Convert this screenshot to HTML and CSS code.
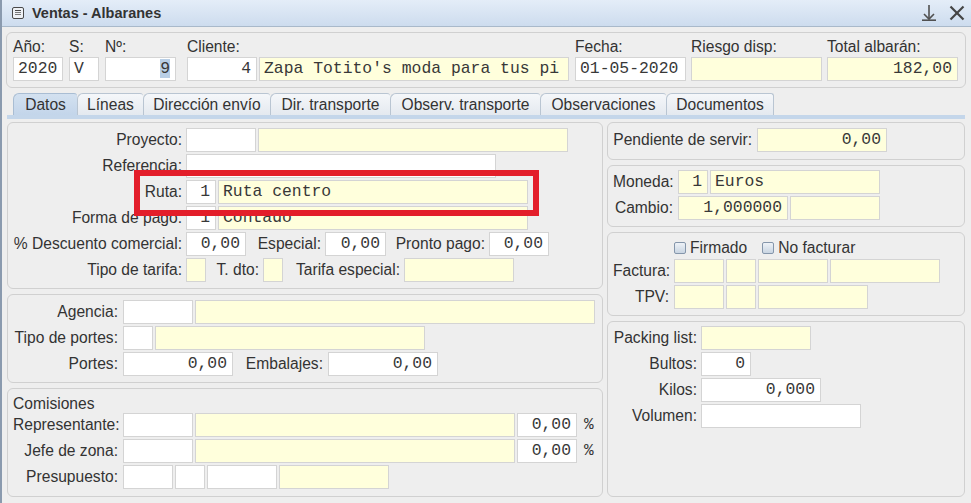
FILE: index.html
```html
<!DOCTYPE html>
<html lang="es">
<head>
<meta charset="utf-8">
<title>Ventas - Albaranes</title>
<link rel="stylesheet" href="styles.css">
</head>
<body>
<div class="window">
  <div class="titlebar">
    <svg class="ticon" width="12" height="12" viewBox="0 0 12 12" aria-hidden="true">
      <rect x="0.5" y="0.5" width="11" height="11" rx="1.5" fill="#eef1f5" stroke="#4a4a4a"/>
      <line x1="3" y1="3.5" x2="9" y2="3.5" stroke="#4a4a4a"/>
      <line x1="3" y1="5.5" x2="9" y2="5.5" stroke="#7a7a7a"/>
      <line x1="3" y1="7.5" x2="9" y2="7.5" stroke="#7a7a7a"/>
    </svg>
    <span class="title">Ventas - Albaranes</span>
    <span class="spacer"></span>
    <svg class="pin" width="16" height="17" viewBox="0 0 16 17" aria-hidden="true">
      <line x1="8" y1="1" x2="8" y2="15" stroke="#505050" stroke-width="1.6"/>
      <polyline points="3,10 8,15 13,10" fill="none" stroke="#505050" stroke-width="1.6"/>
      <line x1="1" y1="16.2" x2="15" y2="16.2" stroke="#505050" stroke-width="1.6"/>
    </svg>
    <svg class="close" width="16" height="16" viewBox="0 0 16 16" aria-hidden="true">
      <line x1="1.5" y1="1.5" x2="14.5" y2="14.5" stroke="#454545" stroke-width="2.2"/>
      <line x1="14.5" y1="1.5" x2="1.5" y2="14.5" stroke="#454545" stroke-width="2.2"/>
    </svg>
  </div>

  <div class="content">
    <div class="panel header">
      <div class="hcol"><div class="hlbl">Año:</div><div class="f wh w50">2020</div></div>
      <div class="hcol m6"><div class="hlbl">S:</div><div class="f wh w30">V</div></div>
      <div class="hcol m6"><div class="hlbl">Nº:</div><div class="f wh w71 r"><span class="sel">9</span></div></div>
      <div class="hcol m11"><div class="hlbl">Cliente:</div>
        <div class="fields"><div class="f wh w70 r">4</div><div class="f ye w310">Zapa Totito's moda para tus pi</div></div>
      </div>
      <div class="hcol m6"><div class="hlbl">Fecha:</div><div class="f wh w111">01-05-2020</div></div>
      <div class="hcol m5"><div class="hlbl">Riesgo disp:</div><div class="f ye w131"></div></div>
      <div class="hcol m5"><div class="hlbl">Total albarán:</div><div class="f ye w131 r">182,00</div></div>
    </div>

    <div class="tabs">
      <div class="tab active t64">Datos</div>
      <div class="tab t66">Líneas</div>
      <div class="tab t127">Dirección envío</div>
      <div class="tab t120">Dir. transporte</div>
      <div class="tab t150">Observ. transporte</div>
      <div class="tab t126">Observaciones</div>
      <div class="tab t108">Documentos</div>
    </div>
    <div class="strip"></div>

    <div class="main">
      <div class="col left">
        <div class="panel p1">
          <div class="row"><span class="lbl l173">Proyecto:</span><div class="f wh w70"></div><div class="f ye w310"></div></div>
          <div class="row"><span class="lbl l173">Referencia:</span><div class="f wh w310"></div></div>
          <div class="row"><span class="lbl l173">Ruta:</span><div class="f wh w30 r">1</div><div class="f ye w310">Ruta centro</div></div>
          <div class="row"><span class="lbl l173">Forma de pago:</span><div class="f wh w30 r">1</div><div class="f ye w310">Contado</div></div>
          <div class="row"><span class="lbl l173">% Descuento comercial:</span><div class="f wh w60 r">0,00</div><span class="lbl l79">Especial:</span><div class="f wh w61 r">0,00</div><span class="lbl l103">Pronto pago:</span><div class="f wh w60 r">0,00</div></div>
          <div class="row"><span class="lbl l173">Tipo de tarifa:</span><div class="f ye w20"></div><span class="lbl l57">T. dto:</span><div class="f ye w20"></div><span class="lbl l121">Tarifa especial:</span><div class="f ye w110"></div></div>
        </div>
        <div class="panel p2">
          <div class="row"><span class="lbl l110">Agencia:</span><div class="f wh w70"></div><div class="f ye w400"></div></div>
          <div class="row"><span class="lbl l110">Tipo de portes:</span><div class="f wh w30"></div><div class="f ye w270"></div></div>
          <div class="row"><span class="lbl l110">Portes:</span><div class="f wh w110 r">0,00</div><span class="lbl l95">Embalajes:</span><div class="f wh w110 r">0,00</div></div>
        </div>
        <div class="panel p3">
          <div class="sect">Comisiones</div>
          <div class="row"><span class="lbl l110">Representante:</span><div class="f wh w70"></div><div class="f ye w320"></div><div class="f wh w60 r">0,00</div><span class="pct">%</span></div>
          <div class="row"><span class="lbl l110">Jefe de zona:</span><div class="f wh w70"></div><div class="f ye w320"></div><div class="f wh w60 r">0,00</div><span class="pct">%</span></div>
          <div class="row"><span class="lbl l110">Presupuesto:</span><div class="f wh w50"></div><div class="f wh w30"></div><div class="f wh w70"></div><div class="f ye w110"></div></div>
        </div>
      </div>

      <div class="col right">
        <div class="panel pa">
          <div class="row"><span class="lbl l144">Pendiente de servir:</span><div class="f ye w130 r">0,00</div></div>
        </div>
        <div class="panel pb">
          <div class="row"><span class="lbl l65">Moneda:</span><div class="f ye w30 r">1</div><div class="f ye w170">Euros</div></div>
          <div class="row"><span class="lbl l65">Cambio:</span><div class="f ye w110 r">1,000000</div><div class="f ye w90"></div></div>
        </div>
        <div class="panel pc">
          <div class="checks">
            <label class="chk"><span class="box"></span>Firmado</label>
            <label class="chk second"><span class="box"></span>No facturar</label>
          </div>
          <div class="row"><span class="lbl l61">Factura:</span><div class="f ye w50"></div><div class="f ye w30"></div><div class="f ye w70"></div><div class="f ye w110"></div></div>
          <div class="row"><span class="lbl l61">TPV:</span><div class="f ye w50"></div><div class="f ye w30"></div><div class="f ye w110"></div></div>
        </div>
        <div class="panel pd">
          <div class="row"><span class="lbl l88">Packing list:</span><div class="f ye w110"></div></div>
          <div class="row"><span class="lbl l88">Bultos:</span><div class="f wh w50 r">0</div></div>
          <div class="row"><span class="lbl l88">Kilos:</span><div class="f wh w120 r">0,000</div></div>
          <div class="row"><span class="lbl l88">Volumen:</span><div class="f wh w160"></div></div>
        </div>
      </div>
    </div>
  </div>

  <div class="mark"></div>
</div>
</body>
</html>
```

FILE: styles.css
```css
html, body {
  margin: 0;
  padding: 0;
  background: #eeeeee;
}

.window {
  position: relative;
  box-sizing: border-box;
  width: 971px;
  height: 503px;
  overflow: hidden;
  background: #eeeeee;
  border-left: 2px solid #8a9aae;
  font-family: "Liberation Sans", Arial, sans-serif;
  font-size: 15.6px;
  color: #333333;
}

/* title bar */
.titlebar {
  display: flex;
  align-items: center;
  height: 26px;
  border-bottom: 1px solid #a9b9ca;
  background: linear-gradient(#e4edf8, #cddcee);
}
.ticon {
  margin-left: 10px;
  flex: none;
}
.title {
  margin-left: 8px;
  font-weight: bold;
  font-size: 14.5px;
  color: #333333;
}
.spacer { flex: 1; }
.pin { flex: none; margin-right: 12px; margin-top: -2px; }
.close { flex: none; margin-right: 6px; }

/* content */
.content {
  padding: 5px 0 0 4px;
}

.panel {
  box-sizing: border-box;
  border: 1px solid #d0d0d0;
  border-radius: 6px;
  background: #eeeeee;
}

/* header */
.header {
  display: flex;
  width: 960px;
  height: 56px;
  padding: 4px 6px 6px 6px;
}
.hcol {
  display: flex;
  flex-direction: column;
  flex: none;
}
.hlbl {
  height: 20px;
  line-height: 20px;
  white-space: nowrap;
}
.fields { display: flex; gap: 2px; }
.m5 { margin-left: 5px; }
.m6 { margin-left: 6px; }
.m11 { margin-left: 11px; }

/* fields */
.f {
  box-sizing: border-box;
  flex: none;
  height: 24px;
  border: 1px solid #d4d4d4;
  padding: 0 5px 0 4px;
  font-family: "Liberation Mono", "DejaVu Sans Mono", monospace;
  font-size: 16.4px;
  line-height: 22px;
  color: #383838;
  white-space: nowrap;
  overflow: hidden;
}
.wh { background: #ffffff; }
.ye { background: #ffffdc; }
.r { text-align: right; }
.sel { background: #b9cfe6; }

.w20 { width: 20px; }
.w30 { width: 30px; }
.w50 { width: 50px; }
.w60 { width: 60px; }
.w61 { width: 61px; }
.w70 { width: 70px; }
.w71 { width: 71px; }
.w90 { width: 90px; }
.w110 { width: 110px; }
.w111 { width: 111px; }
.w120 { width: 120px; }
.w130 { width: 130px; }
.w131 { width: 131px; }
.w160 { width: 160px; }
.w170 { width: 170px; }
.w270 { width: 270px; }
.w310 { width: 310px; }
.w320 { width: 320px; }
.w400 { width: 400px; }

/* tabs */
.tabs {
  display: flex;
  margin: 5px 0 0 7px;
  height: 22px;
}
.tab {
  box-sizing: border-box;
  flex: none;
  height: 22px;
  border: 1px solid #b9c5d2;
  border-bottom: none;
  border-right: none;
  border-radius: 6px 3px 0 0;
  background: linear-gradient(#f5f7fa, #e4e9ef);
  text-align: center;
  line-height: 21px;
  white-space: nowrap;
  color: #333333;
}
.tab:last-child { border-right: 1px solid #b9c5d2; }
.tab.active {
  background: linear-gradient(#d3e1f0, #c3d5ea);
  border-color: #a9bdd3;
}
.t64 { width: 64px; }
.t66 { width: 66px; }
.t127 { width: 127px; }
.t120 { width: 120px; }
.t150 { width: 150px; }
.t126 { width: 126px; }
.t108 { width: 108px; }

.strip {
  margin-left: 1px;
  width: 958px;
  height: 4px;
  background: #c4d6ea;
}

/* main area */
.main {
  display: flex;
  gap: 4px;
  margin: 3px 0 0 1px;
  width: 958px;
  height: 375px;
}
.col {
  display: flex;
  flex-direction: column;
  gap: 5px;
}
.left { width: 596px; flex: none; }
.right { width: 358px; flex: none; }

.row {
  display: flex;
  align-items: center;
  gap: 2px;
  height: 24px;
}
.lbl {
  box-sizing: border-box;
  flex: none;
  text-align: right;
  padding-right: 2px;
  white-space: nowrap;
}
.l173 { width: 171px; }
.l79 { width: 75px; }
.l103 { width: 99px; }
.l57 { width: 53px; }
.l121 { width: 117px; }
.l110 { width: 108px; padding-right: 3px; }
.l95 { width: 91px; padding-right: 3px; }
.l144 { width: 142px; padding-right: 3px; }
.l65 { width: 63px; padding-right: 3px; }
.l61 { width: 59px; padding-right: 3px; }
.l88 { width: 86px; padding-right: 2px; }

.p1 {
  display: flex;
  flex-direction: column;
  gap: 2px;
  height: 167px;
  padding: 5px 5px 6px 5px;
}
.p2 {
  display: flex;
  flex-direction: column;
  gap: 2px;
  height: 89px;
  padding: 5px 5px 6px 5px;
}
.p3 {
  display: flex;
  flex-direction: column;
  gap: 2px;
  flex: 1;
  padding: 6px 5px 6px 5px;
}
.sect {
  height: 17px;
  line-height: 17px;
  margin-bottom: -1px;
}
.pct {
  margin-left: 5px;
  font-family: "Liberation Mono", "DejaVu Sans Mono", monospace;
  font-size: 16px;
}

.pa {
  height: 38px;
  padding: 5px 5px 7px 5px;
}
.pb {
  display: flex;
  flex-direction: column;
  gap: 2px;
  height: 62px;
  padding: 4px 5px 6px 5px;
}
.pc {
  display: flex;
  flex-direction: column;
  gap: 2px;
  height: 84px;
  padding: 5px 5px 6px 5px;
}
.pd {
  display: flex;
  flex-direction: column;
  gap: 2px;
  flex: 1;
  padding: 4px 5px 5px 5px;
}

.checks {
  display: flex;
  align-items: center;
  height: 19px;
  padding-left: 61px;
}
.chk {
  display: inline-flex;
  align-items: center;
  white-space: nowrap;
}
.chk.second { margin-left: 15px; }
.box {
  box-sizing: border-box;
  width: 12px;
  height: 12px;
  margin-right: 4px;
  border: 1px solid #8596ab;
  border-radius: 2px;
  background: linear-gradient(#eef2f7, #c9d5e2);
}

/* red annotation overlay */
.mark {
  position: absolute;
  left: 132px;
  top: 170px;
  width: 405px;
  height: 46px;
  box-sizing: border-box;
  border: 6px solid #e31e2a;
}
```
